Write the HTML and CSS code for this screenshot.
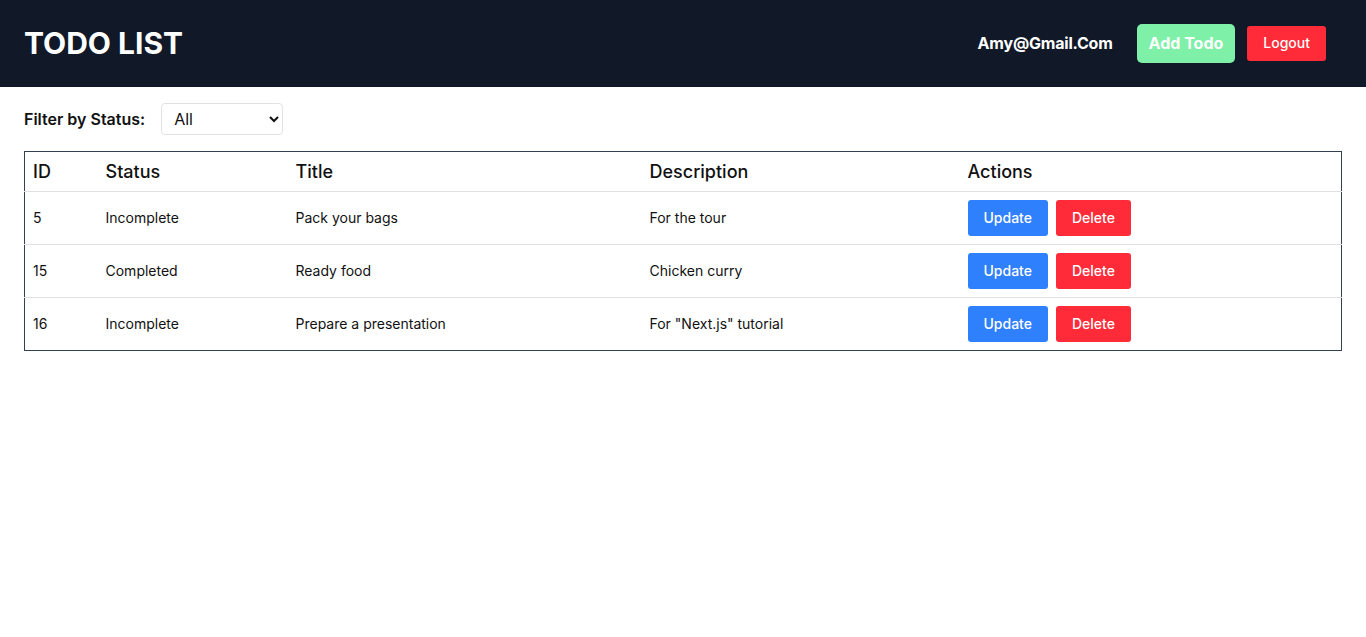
FILE: index.html
```html
<!DOCTYPE html>
<html lang="en">
<head>
<meta charset="utf-8">
<title>Todo List</title>
<link rel="stylesheet" href="styles.css">
</head>
<body>
<header class="topbar">
  <h1 class="brand">TODO LIST</h1>
  <div class="user-area">
    <span class="email">Amy@Gmail.Com</span>
    <button class="btn-add">Add Todo</button>
    <button class="btn-logout">Logout</button>
  </div>
</header>
<main class="content">
  <div class="filter">
    <label class="filter-label" for="status">Filter by Status:</label>
    <select id="status" class="filter-select">
      <option>All</option>
      <option>Completed</option>
      <option>Incomplete</option>
    </select>
  </div>
  <table class="todo-table">
    <colgroup>
      <col class="c-id"><col class="c-status"><col class="c-title"><col class="c-desc"><col class="c-actions">
    </colgroup>
    <thead>
      <tr><th>ID</th><th>Status</th><th>Title</th><th>Description</th><th>Actions</th></tr>
    </thead>
    <tbody>
      <tr>
        <td class="txt">5</td><td class="txt">Incomplete</td><td class="txt">Pack your bags</td><td class="txt">For the tour</td>
        <td><div class="actions"><button class="btn-update">Update</button><button class="btn-delete">Delete</button></div></td>
      </tr>
      <tr>
        <td class="txt">15</td><td class="txt">Completed</td><td class="txt">Ready food</td><td class="txt">Chicken curry</td>
        <td><div class="actions"><button class="btn-update">Update</button><button class="btn-delete">Delete</button></div></td>
      </tr>
      <tr>
        <td class="txt">16</td><td class="txt">Incomplete</td><td class="txt">Prepare a presentation</td><td class="txt">For "Next.js" tutorial</td>
        <td><div class="actions"><button class="btn-update">Update</button><button class="btn-delete">Delete</button></div></td>
      </tr>
    </tbody>
  </table>
</main>
</body>
</html>
```
FILE: styles.css
```css
* { box-sizing: border-box; }
html, body { margin: 0; padding: 0; background: #fff; }
body { font-family: Inter, "Noto Sans", sans-serif; color: #111; }
button { font-family: inherit; border: none; cursor: pointer; }

.topbar {
  height: 87px;
  background: #111827;
  display: flex;
  align-items: center;
  justify-content: space-between;
  padding: 0 40px 1px 24px;
}
.brand {
  margin: 0;
  color: #fff;
  font-size: 30px;
  font-weight: 700;
  line-height: 36px;
}
.user-area { display: flex; align-items: center; }
.email {
  color: #fff;
  font-weight: 700;
  font-size: 16px;
  letter-spacing: -0.2px;
  margin-right: 24px;
}
.btn-add {
  background: #7ef0a8;
  color: #fff;
  font-weight: 700;
  font-size: 16px;
  line-height: 24px;
  height: 39px;
  padding: 0 12px;
  border-radius: 5px;
  margin-right: 12px;
}
.btn-logout {
  background: #ff2b38;
  color: #fff;
  font-weight: 500;
  font-size: 14px;
  height: 35px;
  padding: 0 16px 2px;
  border-radius: 3px;
}

.content { padding: 16px 24px; }
.filter { display: flex; align-items: center; gap: 16px; margin-bottom: 16px; }
.filter-label { font-weight: 600; font-size: 16px; color: #111; }
.filter-select {
  width: 122px;
  height: 32px;
  border: 1px solid #e2e2e2;
  border-radius: 4px;
  background: #fff;
  font-family: inherit;
  font-size: 16px;
  padding: 0 8px;
  color: #111;
}

.todo-table {
  width: 100%;
  border-collapse: collapse;
  table-layout: fixed;
  border: 1px solid #334155;
}
.c-id { width: 73px; }
.c-status { width: 190px; }
.c-title { width: 354px; }
.c-desc { width: 318px; }
.todo-table th {
  text-align: left;
  font-weight: 500;
  font-size: 18px;
  height: 40px;
  padding: 0 8px;
  color: #111;
}
.todo-table td {
  font-size: 14px;
  height: 53px;
  padding: 0 8px;
  color: #111;
}
.todo-table td.txt { padding-bottom: 2px; }
.todo-table tbody tr { border-top: 1px solid #e0e0e0; }
.actions { display: flex; gap: 8px; }
.btn-update, .btn-delete {
  height: 36px;
  padding: 0 16px 2px;
  font-size: 14px;
  font-weight: 500;
  color: #fff;
  border-radius: 3px;
}
.btn-update { background: #2f80fc; }
.btn-delete { background: #ff2b38; }
```
